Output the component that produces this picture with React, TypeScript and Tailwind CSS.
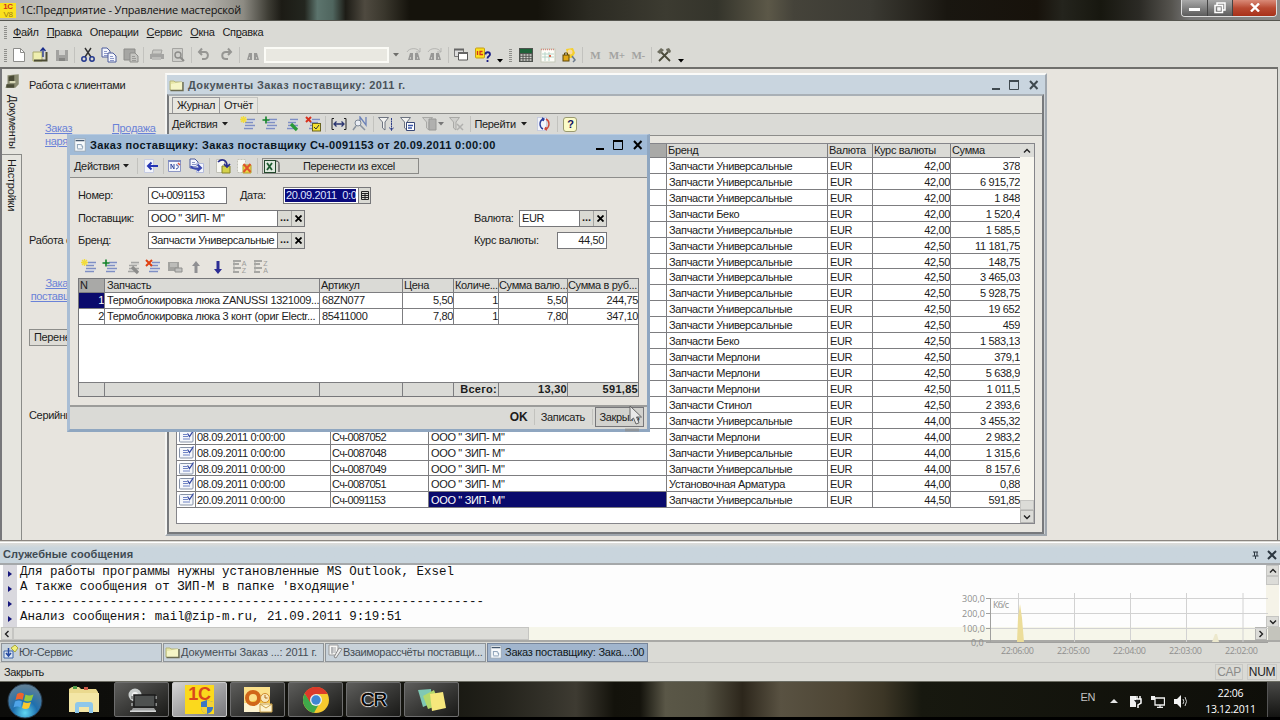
import React, { useState } from 'react';
import { clsx } from 'clsx';

type Mark = 'new' | 'add' | 'edit' | 'delete' | 'mark';

interface OrderRow {
    date?: string;
    number?: string;
    brand: string;
    rate: string;
    sum: string;
}

const UNI = 'Запчасти Универсальные';
const BEKO = 'Запчасти Беко';
const MERLONI = 'Запчасти Мерлони';

const orders: OrderRow[] = [
    { brand: UNI, rate: '42,00', sum: '378' },
    { brand: UNI, rate: '42,00', sum: '6 915,72' },
    { brand: UNI, rate: '42,00', sum: '1 848' },
    { brand: BEKO, rate: '42,00', sum: '1 520,4' },
    { brand: UNI, rate: '42,00', sum: '1 585,5' },
    { brand: UNI, rate: '42,50', sum: '11 181,75' },
    { brand: UNI, rate: '42,50', sum: '148,75' },
    { brand: UNI, rate: '42,50', sum: '3 465,03' },
    { brand: UNI, rate: '42,50', sum: '5 928,75' },
    { brand: UNI, rate: '42,50', sum: '19 652' },
    { brand: UNI, rate: '42,50', sum: '459' },
    { brand: BEKO, rate: '42,50', sum: '1 583,13' },
    { brand: MERLONI, rate: '42,50', sum: '379,1' },
    { brand: MERLONI, rate: '42,50', sum: '5 638,9' },
    { brand: MERLONI, rate: '42,50', sum: '1 011,5' },
    { brand: 'Запчасти Стинол', rate: '42,50', sum: '2 393,6' },
    { brand: UNI, rate: '44,00', sum: '3 455,32' },
    { date: '08.09.2011 0:00:00', number: 'Сч-0087052', brand: MERLONI, rate: '44,00', sum: '2 983,2' },
    { date: '08.09.2011 0:00:00', number: 'Сч-0087048', brand: UNI, rate: '44,00', sum: '1 315,6' },
    { date: '08.09.2011 0:00:00', number: 'Сч-0087049', brand: UNI, rate: '44,00', sum: '8 157,6' },
    { date: '08.09.2011 0:00:00', number: 'Сч-0087051', brand: 'Установочная Арматура', rate: '44,00', sum: '0,88' },
    { date: '20.09.2011 0:00:00', number: 'Сч-0091153', brand: UNI, rate: '44,50', sum: '591,85' },
];

const parts = [
    { name: 'Термоблокировка люка ZANUSSI 1321009...', article: '68ZN077', price: '5,50', qty: '1', sum: '5,50', rub: '244,75' },
    { name: 'Термоблокировка люка 3 конт (ориг Electr...', article: '85411000', price: '7,80', qty: '1', sum: '7,80', rub: '347,10' },
];

const messages = [
    'Для работы программы нужны установленные MS Outlook, Exsel',
    "А также сообщения от ЗИП-М в папке 'входящие'",
    '--------------------------------------------------------------',
    'Анализ сообщения: mail@zip-m.ru, 21.09.2011 9:19:51',
];

/* ---------- icons ---------- */

const Svg: React.FC<{ children: React.ReactNode; size?: number }> = ({ children, size = 16 }) => (
    <svg width={size} height={size} viewBox="0 0 16 16" fill="none" className="block shrink-0">
        {children}
    </svg>
);

const ListIcon: React.FC<{ mark: Mark; muted?: boolean }> = ({ mark, muted }) => {
    const line = muted ? '#a5a5a3' : '#7f8fc4';
    return (
        <Svg>
            <path d="M7 3.5h8M5 6.5h8M5 9.5h10M4 12.5h9" stroke={line} strokeWidth="1.6" />
            <path d="M7 5h8M5 11h9" stroke={muted ? '#c4c4c2' : '#c9d1ea'} />
            {mark === 'new' && <path d="M3.5 0v7M0 3.5h7M1 1l5 5M6 1l-5 5" stroke="#f2dc3c" strokeWidth="1.4" />}
            {mark === 'add' && <path d="M4 0.5v7M0.5 4h7" stroke="#12822a" strokeWidth="1.6" />}
            {mark === 'edit' && <path d="M8 8l6 6" stroke={muted ? '#8c8c8a' : '#2a9a3a'} strokeWidth="3.2" />}
            {mark === 'delete' && <path d="M1 1l6 6M7 1L1 7" stroke="#e04010" strokeWidth="2" />}
            {mark === 'mark' && (
                <>
                    <path d="M1 1l5 5M6 1L1 6" stroke="#d8301c" strokeWidth="2" />
                    <rect x="7.5" y="7.5" width="8" height="7.5" fill="#f4e232" stroke="#6a6420" />
                    <path d="M9 11l2 2 3-4" stroke="#333" />
                </>
            )}
        </Svg>
    );
};

const Folder = () => (
    <Svg>
        <path d="M1 4h4l1 1h7v8H1z" fill="#e6e6a6" stroke="#b6b67c" />
        <path d="M2 7l11-2v8H2z" fill="#f5f5c6" />
        <path d="M14 5v8.5H1.500" stroke="#6c6c50" strokeWidth="1.400" />
    </Svg>
);

const DocIcon = () => (
    <Svg size={14}>
        <rect x="2" y="1" width="12" height="14" fill="#f7fafc" stroke="#9aa7b4" />
        <path d="M3 3h10" stroke="#44586e" strokeWidth="1.4" />
        <path d="M5 7.5h5M5 12.5h6M5 7v5M9 9h2v3" stroke="#7b93ab" />
    </Svg>
);

const RowIcon = () => (
    <svg width="16" height="13" viewBox="0 0 16 13" fill="none" className="block">
        <rect x="0.5" y="1.5" width="13.500" height="10.5" rx="1" fill="#f5f7fb" stroke="#8793a8" />
        <path d="M4 4.500h4M4 6.500h5M4 9h7" stroke="#6f83c4" />
        <path d="M8.500 3.500l2 3L14.500 0.5" stroke="#3448a4" strokeWidth="1.300" />
    </svg>
);

const Doc: React.FC<{ x?: number; y?: number; muted?: boolean }> = ({ x = 0, y = 0, muted }) => (
    <g transform={`translate(${x} ${y})`}>
        <path d="M1 1h5l3 3v6H1z" fill={muted ? '#c6c6c2' : '#f4f6fc'} stroke={muted ? '#8f8f8c' : '#4d5c9c'} />
        <path d="M3 4.5h3M3 6.5h4M3 8.5h4" stroke={muted ? '#8f8f8c' : '#7482bb'} strokeWidth="0.8" />
    </g>
);

const Binoculars: React.FC<{ arrow?: boolean }> = ({ arrow }) => (
    <Svg>
        <path d="M4 6h3v7H2zM9 6h3l2 7H9z" fill="#989896" />
        <path d="M7 8h2M4 11h1M11 11h1" stroke="#d8d8d4" strokeWidth="1.4" />
        {arrow && <path d="M1 5c2-4 10-5 13 0M14 1v4h-4" stroke="#b5b5b2" />}
    </Svg>
);

const Funnel: React.FC<{ muted?: boolean; children?: React.ReactNode }> = ({ muted, children }) => (
    <Svg>
        <path d="M0.5 1.5h10L7 6v8L4.5 12V6z" fill={muted ? '#cfcfcc' : '#f2f2f0'} stroke={muted ? '#a9a9a6' : '#6e7480'} />
        {children}
    </Svg>
);

/* ---------- small pieces ---------- */

function cn(...names: string[]) {
    return names.join(' ');
}

const Slot: React.FC<{ children: React.ReactNode }> = ({ children }) => (
    <div className="flex w-[21.5px] shrink-0 items-center justify-center">{children}</div>
);

const Sep: React.FC<{ wide?: boolean }> = ({ wide }) => (
    <div className={clsx('flex h-4 shrink-0 justify-center', wide ? 'w-[6px]' : 'w-[4.5px]')}>
        <div className="w-px bg-[#c2c2be]" />
    </div>
);

const Grip = () => (
    <div className="flex w-[10px] shrink-0 justify-center">
        <svg width="3" height="13" viewBox="0 0 3 13">
            <path d="M0 0.5h3M0 2.5h3M0 4.5h3M0 6.5h3M0 8.5h3M0 10.5h3M0 12.5h3" stroke="#8e8e8a" />
        </svg>
    </div>
);

const Down: React.FC<{ className?: string }> = ({ className = 'text-black' }) => (
    <svg width="6" height="4" viewBox="0 0 6 4" className={clsx('shrink-0', className)}>
        <path d="M0 0h6L3 3.5z" fill="currentColor" />
    </svg>
);

const Chevron: React.FC<{ d: string }> = ({ d }) => (
    <svg width="8" height="8" viewBox="0 0 8 8" fill="none">
        <path d={d} stroke="#222" strokeWidth="1.4" />
    </svg>
);

const WindowButtons: React.FC<{ className: string }> = ({ className }) => (
    <svg width="48" height="12" viewBox="0 0 48 12" fill="none" className={clsx('shrink-0', className)}>
        <path d="M1 10h8" stroke="currentColor" strokeWidth="2" />
        <path d="M18.500 2v8.500h9V2" stroke="currentColor" />
        <path d="M18 2h10" stroke="currentColor" strokeWidth="2" />
        <path d="M39 2l7.500 8M46.500 2l-7.500 8" stroke="currentColor" strokeWidth="2" />
    </svg>
);

const PickButtons = () => (
    <>
        <button className="flex h-full w-[14px] items-center justify-center border-l border-[#77777a] bg-[#dadad4] pb-0.5 font-bold tracking-normal">...</button>
        <button className="flex h-full w-[13px] items-center justify-center border-l border-[#a5a5a2] bg-[#dadad4]">
            <svg width="7" height="7" viewBox="0 0 7 7">
                <path d="M0.5 0.500l6 6M6.500 0.500l-6 6" stroke="#000" strokeWidth="1.800" />
            </svg>
        </button>
    </>
);

/* ---------- main frame ---------- */

const TitleBar = () => (
    <div className="flex h-[21px] items-start border-b border-[#55554f] bg-[linear-gradient(90deg,#b9b7b1_0%,#c9c7c2_9%,#b3b1ab_16%,#8d8b83_19%,#3c3b33_21%,#1c1b15_22%,#23261f_23.800%,#5c746d_24.800%,#4f655e_26%,#1d1c16_27%,#4f4a40_28.500%,#3a372d_30%,#15130c_32%,#15130c_42%,#2b2a22_46%,#3c3b31_52%,#34342b_56%,#5c5848_60%,#45433a_62%,#3b3a33_68%,#191610_74%,#17120b_81%,#24241d_83%,#17170f_86%,#2b2a25_89%,#55534e_91.500%,#777_93%,#8a8a88_100%)]">
        <div className="mt-[3px] grid h-[15px] w-4 place-items-center bg-[#fbe11e] text-[8px] leading-[7px] font-bold text-[#d4301a]">
            <span>1С</span>
            <span className="font-normal text-[#a08010]">V8</span>
        </div>
        <span className="ml-1 pt-[3px] font-['Open_Sans',sans-serif] text-[11px] leading-[14px] tracking-[-0.180px] whitespace-nowrap text-[#111]">
            1С:Предприятие - Управление мастерской
        </span>
        <div className="mr-[3px] ml-auto flex h-[17px] overflow-hidden rounded-b border border-t-0 border-[#ddd] text-white">
            <div className="flex w-[26px] justify-center border-r border-[#444] bg-linear-to-b from-[#a9a9a9] to-[#5c5c5c] pt-2">
                <div className="h-[3px] w-[11px] bg-white" />
            </div>
            <div className="flex w-[25px] justify-center border-r border-[#444] bg-linear-to-b from-[#a9a9a9] to-[#5c5c5c] pt-0.5">
                <svg width="12" height="12" viewBox="0 0 12 12" fill="none" stroke="#fff" strokeWidth="1.500">
                    <path d="M3 3V1h8v7H9M1 3.500h7.500v7H1zM4 6h2v2H4z" />
                </svg>
            </div>
            <div className="flex w-[43px] justify-center bg-linear-to-b from-[#d98a78] via-[#b94a32] to-[#a83018] pt-[3px]">
                <svg width="10" height="9" viewBox="0 0 10 9">
                    <path d="M1 0.500l8 8M9 0.500l-8 8" stroke="#fff" strokeWidth="2.400" />
                </svg>
            </div>
        </div>
    </div>
);

const menu = [
    ['', 'Ф', 'айл'],
    ['', 'П', 'равка'],
    ['Операции', '', ''],
    ['', 'С', 'ервис'],
    ['', 'О', 'кна'],
    ['Сп', 'р', 'авка'],
];

const MenuBar = () => (
    <div className="flex h-[22px] items-center text-[11px]">
        <div className="mr-[3px] flex"><Grip /></div>
        <div className="flex gap-[8px]">
            {menu.map(([a, b, c]) => (
                <span key={a + b + c}>{a}<u>{b}</u>{c}</span>
            ))}
        </div>
    </div>
);

const MainToolbar = () => (
    <div className="flex h-6 items-center">
        <div className="flex w-[8px]"><Grip /></div>
        <Slot><Svg><path d="M2.500 1.500h7l4 4v9h-11z" fill="#fff" stroke="#8d8d8a" /><path d="M9.500 1.500v4h4" stroke="#8d8d8a" /></Svg></Slot>
        <Slot>
            <Svg>
                <path d="M1 5h9v9H1z" fill="#efefb0" stroke="#a9a96c" />
                <path d="M14.500 5v8.500H2" stroke="#4c4c34" strokeWidth="2" />
                <path d="M11 10V1M8.500 4L11 1l2.500 3" stroke="#1b2f8c" strokeWidth="1.300" />
            </Svg>
        </Slot>
        <Slot><Svg><path d="M2 3h12v11H2z" fill="#a2a2a0" /><path d="M5 3h6v5H5z" fill="#cfcfcc" /><path d="M5 11h6v3H5z" fill="#858583" /></Svg></Slot>
        <Sep />
        <Slot>
            <Svg>
                <path d="M5 1l6 9M11 1L5 10" stroke="#333" strokeWidth="1.400" />
                <circle cx="4" cy="12" r="2.200" stroke="#23388f" strokeWidth="1.500" />
                <circle cx="12" cy="12" r="2.200" stroke="#23388f" strokeWidth="1.500" />
            </Svg>
        </Slot>
        <Slot><Svg><Doc /><Doc x={6} y={5} /></Svg></Slot>
        <Slot><Svg><path d="M1 2h11v11H1z" fill="#a6a6a3" stroke="#8c8c89" /><Doc x={6} y={5} muted /></Svg></Slot>
        <Sep />
        <Slot><Svg><path d="M4 3h9l-1 4H3z" fill="#c9c9c5" stroke="#a2a29f" /><path d="M1 7h14v5H1z" fill="#a4a4a2" /><path d="M3 10h9v3H3z" fill="#bcbcb9" /></Svg></Slot>
        <Slot><Svg><path d="M2.500 1.500h10v13h-10z" fill="#cfcfcb" stroke="#a4a4a1" /><circle cx="8" cy="8" r="3" stroke="#8c8c89" strokeWidth="1.400" /><path d="M10 10l4 4" stroke="#8c8c89" strokeWidth="2" /></Svg></Slot>
        <Sep />
        <Slot><Svg><path d="M3 5h6c4 0 4 7-1 7H6M6 1.500L3 5l3 3" stroke="#969693" strokeWidth="2" /></Svg></Slot>
        <Slot><Svg><path d="M13 5H8c-5 0-5 7 0 7h2M10 1.500L13 5l-3 3" stroke="#969693" strokeWidth="2" /></Svg></Slot>
        <Sep wide />
        <Slot><Binoculars /></Slot>
        <div className="h-4 w-[125px] shrink-0 border-2 border-[#fbfbf6] bg-[#e9e8e1]" />
        <div className="flex h-4 w-[14px] shrink-0 items-center justify-center"><Down className="text-[#6e6e6b]" /></div>
        <Slot><Binoculars arrow /></Slot>
        <Slot><Binoculars arrow /></Slot>
        <Sep />
        <Slot>
            <Svg>
                <path d="M1.500 2.500h9v7h-9z" fill="#ddd" stroke="#777" />
                <path d="M5.500 6h9v7h-9z" fill="#fff" stroke="#555" />
                <path d="M1 2.500h10M5 6h10" stroke="#666" strokeWidth="2" />
            </Svg>
        </Slot>
        <Slot>
            <Svg>
                <rect x="0.500" y="1" width="9" height="10" rx="1" fill="#fbe11e" stroke="#c59c14" />
                <path d="M2.500 4v4M7.500 4.500H5v3h3" stroke="#d5331c" strokeWidth="1.300" />
                <path d="M10.500 7.500c0-3 4.500-3 4.500 0 0 2-2.500 1.500-2.500 4M12.500 13v2" stroke="#1a1f86" strokeWidth="1.800" />
            </Svg>
        </Slot>
        <div className="flex w-3 justify-center pt-3"><Down /></div>
        <Grip />
        <Slot>
            <Svg>
                <rect x="1" y="1" width="14" height="14" fill="#4e524e" />
                <path d="M2 2h12v4H2z" fill="#1c6238" />
                <path d="M2.500 8h11M2.500 10.500h11M2.500 13h11" stroke="#d9d9d5" strokeWidth="1.500" strokeDasharray="2 1" />
            </Svg>
        </Slot>
        <Slot>
            <Svg>
                <rect x="1" y="2" width="14" height="13" fill="#fdfdf8" stroke="#c5c9ba" />
                <path d="M1 2.500h14" stroke="#d88a80" strokeWidth="1.500" strokeDasharray="1 1" />
                <path d="M2 7h12M2 10h12M5 5v9M9 5v9" stroke="#b7d5c9" />
                <path d="M9 8h2v2H9z" fill="#e06a50" />
            </Svg>
        </Slot>
        <Slot>
            <Svg>
                <path d="M5 2l7-1 2 5-3 5H7z" fill="#f5cf2c" />
                <circle cx="9" cy="5" r="2.500" fill="#f7d9a0" />
                <path d="M11 9l3 4-2 2" stroke="#6d7c8c" strokeWidth="1.500" />
                <rect x="2" y="8" width="6" height="6" fill="#e0a818" stroke="#5e4708" />
                <path d="M3.500 8V6h3v2" stroke="#5e4708" />
            </Svg>
        </Slot>
        <Sep />
        {['M', 'M+', 'M-'].map(m => (
            <Slot key={m}><span className="font-['Liberation_Serif',serif] text-[11px] font-bold text-[#a3a3a1]">{m}</span></Slot>
        ))}
        <Sep />
        <Slot>
            <Svg>
                <path d="M3 14l9-9M5 5l9 9" stroke="#4a4a3a" strokeWidth="1.800" />
                <path d="M1 5l4-4 3 2-4 4zM10 2l3-1 2 3-1 2-3-1z" fill="#6c6c5e" />
            </Svg>
        </Slot>
        <div className="flex w-3 justify-center pt-3"><Down /></div>
    </div>
);

/* ---------- start page behind the windows ---------- */

const SideTabs = () => (
    <div className="flex w-[22px] shrink-0 flex-col items-center border-l-2 border-[#77777a] bg-[#e6e5df] pt-1">
        <Svg size={18}>
            <path d="M4 2l10-1v9l-3 3H2l2-4z" fill="#8b8c72" />
            <path d="M5 3l5-1v5H5zM3 10h7v3H3z" fill="#4a4b36" />
            <path d="M6 8h5" stroke="#e6e6c4" strokeWidth="1.500" />
        </Svg>
        <div className="mt-1 h-[59px] shrink-0 [writing-mode:vertical-rl]">Документы</div>
        <div className="w-full flex-1 border-t border-r border-[#8b8b88] bg-[#e6e5df]">
            <div className="flex h-[60px] w-full items-center pt-[4px] tracking-[-0.200px] [writing-mode:vertical-rl]">Настройки</div>
        </div>
    </div>
);

const StartPage = () => (
    <div className="flex flex-1 flex-col bg-[#e7e4de] pl-[7px]">
        <p className="mt-[10px]">Работа с клиентами</p>
        <div className="mt-[30px] flex gap-[37px] pl-[16px] leading-[13px] text-[#6a82d8] underline">
            <p className="w-[30px]">Заказ наряд</p>
            <p>Продажа</p>
        </div>
        <p className="mt-[86px]">Работа с поставщиками</p>
        <p className="mt-[30px] w-[60px] text-center leading-[13px] text-[#6a82d8] underline">Заказ поставщику</p>
        <button className="mt-[26px] h-[17px] w-[90px] border border-[#8d8d8a] bg-[#dedcd6] pl-[4px] text-left leading-[13px]">Перенести</button>
        <p className="mt-[63px]">Серийный номер</p>
    </div>
);

/* ---------- order list window ---------- */

const OrderListWindow = () => {
    const cell = 'shrink-0 overflow-hidden border-r border-[#7d7d80] whitespace-nowrap';
    return (
        <div className="absolute top-[4px] left-[165px] flex h-[463px] w-[882px] flex-col border-2 border-t-[#fafaf8] border-r-[#a0a7ae] border-b-[#a0a7ae] border-l-[#f4f4f2] bg-[#cfd3d6]">
            <div className="flex h-[19px] items-center bg-[#c9d5df] pt-px pr-1 pl-[2px] text-[#4b5359]">
                <Folder />
                <span className="ml-[3px] font-bold tracking-[0.400px]">Документы Заказ поставщику: 2011 г.</span>
                <WindowButtons className="mr-[2px] ml-auto text-[#3f494f]" />
            </div>
            <div className="mr-[1px] flex flex-1 flex-col border-2 border-[#77797c] border-t-[#a9b0b6] bg-[#e7e5df]">
                <div className="flex h-[17px] items-end bg-[#e7e6e0]">
                    <div className="ml-[3px] flex h-[16px] w-[48px] items-center justify-center border border-b-0 border-[#97979a]">Журнал</div>
                    <div className="flex h-[16px] w-[38px] items-center justify-center border-t border-r border-[#c5c5c1]">Отчёт</div>
                </div>
                <div className="flex h-[23px] items-center border-t border-b border-[#8d8d8b] bg-[#dadad6] pb-px">
                    <span className="ml-[3px]">Действия</span>
                    <Down className="mr-[9px] ml-[5px]" />
                    <Slot><ListIcon mark="new" /></Slot>
                    <Slot><ListIcon mark="add" /></Slot>
                    <Slot><ListIcon mark="edit" /></Slot>
                    <Slot><ListIcon mark="mark" /></Slot>
                    <Sep />
                    <Slot>
                        <Svg>
                            <path d="M3 2.500H1v11h2M13 2.500h2v11h-2" stroke="#222" />
                            <path d="M3 8h10M5.500 5.500L3 8l2.500 2.500M10.500 5.500L13 8l-2.500 2.500" stroke="#2a3570" strokeWidth="1.300" />
                        </Svg>
                    </Slot>
                    <Slot>
                        <Svg>
                            <path d="M8 9V1l6 8V1" stroke="#6d83b8" strokeWidth="1.300" />
                            <circle cx="6" cy="7" r="3" fill="#e9edf4" stroke="#7c8694" />
                            <path d="M8 9l5 5M4 10l-3 4" stroke="#8a93a0" strokeWidth="1.500" />
                        </Svg>
                    </Slot>
                    <Sep />
                    <Slot><Funnel><path d="M13.500 2v12M11.500 11.500l2 3 2-3" stroke="#2c3c88" strokeDasharray="2 0.500" /></Funnel></Slot>
                    <Slot><Funnel><path d="M6.500 6.500h8v8h-8z" fill="#fff" stroke="#3a4a78" /><path d="M8 9.500h5M8 12h4" stroke="#3855a8" strokeWidth="1.500" /></Funnel></Slot>
                    <div className="flex w-[28px] items-center pl-1">
                        <Funnel muted><path d="M7 3h7v11H7z" fill="#b0b0ae" stroke="#989896" /></Funnel>
                        <Down className="text-[#777]" />
                    </div>
                    <Slot><Funnel muted><path d="M8 8l6 6M14 8l-6 6" stroke="#b0b0ae" strokeWidth="1.500" /></Funnel></Slot>
                    <Sep />
                    <span className="ml-[2px]">Перейти</span>
                    <Down className="mr-[7px] ml-[5px]" />
                    <Slot>
                        <Svg>
                            <path d="M1.500 1.500h9v13h-9z" fill="#f2f4fa" stroke="#aab3d8" strokeDasharray="1 1" />
                            <path d="M7 3c-4 2-4 8 0 10M6 2l2 1-1 2" stroke="#2b3f9c" strokeWidth="1.400" />
                            <path d="M10 3c4 2 4 8 0 10M11 14l-2-1 1-2" stroke="#cf4a3c" strokeWidth="1.400" />
                        </Svg>
                    </Slot>
                    <Sep />
                    <Slot>
                        <span className="grid h-[15px] w-[14px] place-items-center rounded-[3px] border border-[#9a9a70] bg-[#fbfbc8] text-[11px] font-bold text-[#101060]">?</span>
                    </Slot>
                </div>
                <div className="mx-[7px] mt-[7px] flex h-[381px] border border-[#85858a] bg-white">
                    <div className="flex-1">
                        <div className="flex h-[14px] border-b border-[#7d7d80] bg-[#dadad6]">
                            <div className={cn(cell, 'w-[19px]')} />
                            <div className={cn(cell, 'w-[135px]')} />
                            <div className={cn(cell, 'w-[98px]')} />
                            <div className={cn(cell, 'w-[238px] bg-[#a9a9a7]')} />
                            <div className={cn(cell, 'w-[161px] pl-[1px]')}>Бренд</div>
                            <div className={cn(cell, 'w-[45px] pl-[1px]')}>Валюта</div>
                            <div className={cn(cell, 'w-[78px] pl-[1px]')}>Курс валюты</div>
                            <div className="pl-[1px]">Сумма</div>
                        </div>
                        {orders.map((o, i) => {
                            const last = i === orders.length - 1;
                            return (
                                <div key={i} className="flex h-[15.930px] items-stretch border-b border-[#7d7d80] leading-[16px]">
                                    <div className={cn(cell, 'w-[19px] pt-[1px] pl-[2px]')}>{o.date && <RowIcon />}</div>
                                    <div className={cn(cell, 'w-[135px] pl-[1px]')}>{o.date}</div>
                                    <div className={cn(cell, 'w-[98px] pl-[1px] tracking-[-0.600px]')}>{o.number}</div>
                                    <div className={cn(cell, last ? 'w-[238px] bg-[#0a0a6c] pl-[2px] text-white' : 'w-[238px] pl-[2px]')}>{o.date && 'ООО " ЗИП- М"'}</div>
                                    <div className={cn(cell, 'w-[161px] pl-[2px]')}>{o.brand}</div>
                                    <div className={cn(cell, 'w-[45px] pl-[2px]')}>EUR</div>
                                    <div className={cn(cell, 'w-[78px] text-right')}>{o.rate}</div>
                                    <div className="flex-1 text-right">{o.sum}</div>
                                </div>
                            );
                        })}
                    </div>
                    <div className="flex w-[14px] flex-col items-center justify-between bg-[#f8f6ee]">
                        <div className="grid h-[13px] w-full place-items-center bg-[#dcdcd8]"><Chevron d="M1 5.500l3-3 3 3" /></div>
                        <div className="w-full">
                            <div className="h-[10px] border border-[#c5c5c2] bg-[#dcdcd8]" />
                            <div className="grid h-[13px] place-items-center border border-[#b5b5b2] bg-[#dcdcd8]"><Chevron d="M1 2.500l3 3 3-3" /></div>
                        </div>
                    </div>
                </div>
            </div>
        </div>
    );
};

/* ---------- order form window ---------- */

const OrderWindow = () => {
    const cell = 'shrink-0 overflow-hidden border-r border-[#7d7d80] whitespace-nowrap';
    const field = 'flex h-[17px] items-center border border-[#77777a] bg-white';
    const [row, setRow] = useState(0);
    return (
        <div className="absolute top-[65px] left-[67px] flex h-[298px] w-[583px] flex-col border-[3px] border-t-[1px] border-[#8fa6c0] border-t-[#b9cbe0] border-l-[#a9bdd4] bg-[#e7e4de]">
            <div className="flex h-[20px] shrink-0 items-center bg-[#a1bbd7] pr-1 pl-[3px]">
                <DocIcon />
                <span className="ml-[3px] font-bold tracking-[0.380px] whitespace-nowrap text-[#0a1622]">
                    Заказ поставщику: Заказ поставщику Сч-0091153 от 20.09.2011 0:00:00
                </span>
                <WindowButtons className="ml-auto text-black" />
            </div>
            <div className="flex h-[23px] shrink-0 items-center border-b border-[#8d8d8b] bg-[#dadad6]">
                <span className="ml-[4px]">Действия</span>
                <Down className="mr-[5px] ml-[4px]" />
                <Sep wide />
                <Slot>
                    <Svg>
                        <path d="M1.500 1.500h9v13h-9z" fill="#f4f6fc" stroke="#c5cbe2" />
                        <path d="M5 8h10M8.500 4.500L5 8l3.500 3.500" stroke="#2434b4" strokeWidth="2" />
                    </Svg>
                </Slot>
                <div className="-mx-[1px] flex"><Sep /></div>
                <Slot>
                    <Svg>
                        <path d="M1.500 2.500h12v11h-12z" fill="#f4f6fc" stroke="#8d97c4" />
                        <path d="M1 3h13" stroke="#7b88c0" strokeWidth="2" />
                        <path d="M4 11V6l3 5V6M9 7c3-1 3 4 0 4" stroke="#3348a0" />
                        <path d="M11 5l2 2" stroke="#d65040" strokeWidth="1.500" />
                    </Svg>
                </Slot>
                <Slot>
                    <Svg>
                        <Doc />
                        <path d="M7.500 5.500h7v9h-7z" fill="#f4f6fc" stroke="#b3bbdc" />
                        <path d="M2 8c1 3 5 3 9 2M8.500 6.500L12 10l-3.500 3" stroke="#3a49ae" strokeWidth="2" />
                    </Svg>
                </Slot>
                <Sep />
                <Slot>
                    <Svg>
                        <path d="M1.500 1.500h8v13h-8z" fill="#f8f8f2" stroke="#c2c2b8" />
                        <path d="M7 8h8v7H7z" fill="#d5d24a" stroke="#85832a" />
                        <path d="M3 4c4-4 9-2 9 4M9 6l3 3 3-3" stroke="#2a2f8c" strokeWidth="1.700" />
                    </Svg>
                </Slot>
                <Slot>
                    <Svg>
                        <path d="M1.500 1.500h8v13h-8z" fill="#f8f8f2" stroke="#c2c2b8" strokeDasharray="2 1" />
                        <path d="M7 7h8v8H7z" fill="#ecd84a" stroke="#b3a02a" />
                        <path d="M7.500 6l7 8M14.500 6l-7 8" stroke="#e0522c" strokeWidth="2" />
                    </Svg>
                </Slot>
                <Sep wide />
                <button className="ml-[1px] flex h-[16px] w-[157px] items-center border border-[#8a8a87] bg-[#dadad4]">
                    <svg width="17" height="15" viewBox="0 0 17 15" fill="none">
                        <rect x="1.500" y="1.500" width="11" height="12" fill="#dfe9df" stroke="#23482c" />
                        <path d="M4 4l5 7M9 4l-5 7" stroke="#1e5c30" strokeWidth="1.800" />
                        <path d="M13 2c3 0 3 2 3 4v7" stroke="#333" />
                    </svg>
                    <span className="ml-[23px]">Перенести из excel</span>
                </button>
            </div>
            <div className="flex flex-1 flex-col pt-[9px] pr-[8px] pl-[8px]">
                <div className="flex items-center">
                    <span className="w-[70px]">Номер:</span>
                    <div className={cn(field, 'w-[79px] pl-[2px] tracking-[-0.600px]')}>Сч-0091153</div>
                    <span className="ml-[13px] w-[43px]">Дата:</span>
                    <div className={cn(field, 'w-[88px] justify-between pl-[1px]')}>
                        <span className="h-[13px] w-[71px] overflow-hidden bg-[#0a0a7c] pl-[1px] leading-[13px] whitespace-nowrap text-[#dfe4ff]">20.09.2011&nbsp; 0:00:00</span>
                        <span className="grid h-full w-[12px] place-items-center border-l border-[#77777a] bg-[#dadad4]">
                            <svg width="8" height="9" viewBox="0 0 8 9" fill="none">
                                <path d="M0.500 0.500h7v8h-7zM0 2.500h8M1 4.500h6M1 6.500h6M4 3v5" stroke="#222" />
                            </svg>
                        </span>
                    </div>
                </div>
                <div className="mt-[6px] flex items-center">
                    <span className="w-[70px]">Поставщик:</span>
                    <div className={cn(field, 'w-[157px] pl-[2px]')}>
                        <span className="flex-1">ООО " ЗИП- М"</span>
                        <PickButtons />
                    </div>
                    <span className="ml-[169px] w-[45px]">Валюта:</span>
                    <div className={cn(field, 'w-[88px] pl-[2px]')}>
                        <span className="flex-1">EUR</span>
                        <PickButtons />
                    </div>
                </div>
                <div className="mt-[5px] flex items-center">
                    <span className="w-[70px]">Бренд:</span>
                    <div className={cn(field, 'w-[157px] pl-[2px]')}>
                        <span className="w-0 flex-1 whitespace-nowrap">{UNI}</span>
                        <PickButtons />
                    </div>
                    <span className="ml-[169px] w-[83px]">Курс валюты:</span>
                    <div className={cn(field, 'w-[50px] justify-end pr-[2px]')}>44,50</div>
                </div>
                <div className="mt-[9px] mb-[3px] flex h-[17px] items-center">
                    <Slot><ListIcon mark="new" /></Slot>
                    <Slot><ListIcon mark="add" /></Slot>
                    <Slot><ListIcon mark="edit" muted /></Slot>
                    <Slot><ListIcon mark="delete" /></Slot>
                    <Slot><Svg><path d="M1 3h11v9H1z" fill="#a3a3a0" /><path d="M3 5h7M3 7h7" stroke="#d5d5d2" /><path d="M8 9h7v4H8z" fill="#c2c2c0" stroke="#8e8e8c" /></Svg></Slot>
                    <Slot><Svg><path d="M8 2l4 5h-2.500v7h-3V7H4z" fill="#8f8f92" /></Svg></Slot>
                    <Slot><Svg><path d="M8 15l4-5H9.500V2h-3v8H4z" fill="#2c2c94" /></Svg></Slot>
                    {['AZ', 'ZA'].map(s => (
                        <Slot key={s}>
                            <div className="flex items-center text-[7px] leading-[7px] text-[#9b9b99]">
                                <svg width="10" height="15" viewBox="0 0 10 15" fill="none">
                                    <path d="M1 2h8M1 5h6M1 9h8M1 13h6" stroke="#a6a6a3" strokeWidth="1.800" />
                                    <path d="M2 2v11" stroke="#a6a6a3" />
                                </svg>
                                <span className="w-[5px] break-all">{s}</span>
                            </div>
                        </Slot>
                    ))}
                </div>
                <div className="flex h-[119px] flex-col border border-[#77777a] bg-white">
                    <div className="flex h-[14px] shrink-0 border-b border-[#7d7d80] bg-[#dadad6] leading-[13px]">
                        <div className={cn(cell, 'w-[26px] bg-[#a9a9a7] pl-[1px]')}>N</div>
                        <div className={cn(cell, 'w-[215px] pl-[2px]')}>Запчасть</div>
                        <div className={cn(cell, 'w-[83px] pl-[1px]')}>Артикул</div>
                        <div className={cn(cell, 'w-[51px] pl-[1px]')}>Цена</div>
                        <div className={cn(cell, 'w-[45px] pl-[1px]')}>Количе...</div>
                        <div className={cn(cell, 'w-[69px]')}>Сумма валю...</div>
                        <div className="whitespace-nowrap">Сумма в руб...</div>
                    </div>
                    {parts.map((p, i) => (
                        <div key={p.article} onClick={() => setRow(i)} className="flex h-[16px] shrink-0 border-b border-[#7d7d80] leading-[15px]">
                            <div className={cn(cell, row === i ? 'w-[26px] bg-[#0a0a6c] text-right text-white' : 'w-[26px] text-right')}>{i + 1}</div>
                            <div className={cn(cell, 'w-[215px] pl-[2px]')}>{p.name}</div>
                            <div className={cn(cell, 'w-[83px] pl-[2px]')}>{p.article}</div>
                            <div className={cn(cell, 'w-[51px] text-right')}>{p.price}</div>
                            <div className={cn(cell, 'w-[45px] text-right')}>{p.qty}</div>
                            <div className={cn(cell, 'w-[69px] text-right')}>{p.sum}</div>
                            <div className="flex-1 text-right">{p.rub}</div>
                        </div>
                    ))}
                    <div className="mt-auto flex h-[14px] border-t border-[#7d7d80] bg-[#dadad6] text-right leading-[13px] font-bold tracking-[0.300px]">
                        <div className={cn(cell, 'w-[26px]')} />
                        <div className={cn(cell, 'w-[215px]')} />
                        <div className={cn(cell, 'w-[83px]')} />
                        <div className={cn(cell, 'w-[51px]')} />
                        <div className={cn(cell, 'w-[45px] pr-[1px]')}>Всего:</div>
                        <div className={cn(cell, 'w-[69px]')}>13,30</div>
                        <div className="flex-1">591,85</div>
                    </div>
                </div>
            </div>
            <div className="flex h-[24px] shrink-0 items-center justify-end border-t-2 border-[#9c9c9a] bg-[#dadad6] pr-[3px] pb-[2px]">
                <span className="text-[12px] font-bold tracking-normal">OK</span>
                <div className="mx-[6px] h-4 w-px bg-[#c2c2be]" />
                <span>Записать</span>
                <div className="mr-[2px] ml-[7px] h-4 w-px bg-[#c2c2be]" />
                <button className="h-[20px] w-[49px] border border-[#77777a] bg-[#d2d2ce] text-center">Закрыть</button>
            </div>
        </div>
    );
};

/* ---------- bottom panels ---------- */

const MessagesPanel = () => (
    <div className="flex flex-col">
        <div className="flex h-[22px] items-center border-b-2 border-[#a5a8aa] bg-linear-to-b from-[#dcdcd8] to-[#c9d5dd] to-25% pt-[3px] pr-[1px] pl-[3px] text-[#3f4a52]">
            <span className="font-bold tracking-[0.100px]">Служебные сообщения</span>
            <svg width="30" height="12" viewBox="0 0 30 12" fill="none" className="ml-auto">
                <path d="M4 3h5M3.500 7h6M5.500 3v4M8 3v4M6.500 7v3" stroke="#2c3740" />
                <path d="M19 2l8 8M27 2l-8 8" stroke="#2c3740" strokeWidth="2" />
            </svg>
        </div>
        <div className="flex h-[62px] bg-[#fdfdfd]">
            <div className="ml-[3px] flex w-[14px] flex-col bg-[#d9d8de] pt-px">
                {messages.map(m => (
                    <div key={m} className="flex h-[15px] items-center justify-center">
                        <svg width="4" height="6" viewBox="0 0 4 6"><path d="M0 0l4 3-4 3z" fill="#15157c" /></svg>
                    </div>
                ))}
            </div>
            <pre className="flex-1 pl-[3px] font-['Liberation_Mono',monospace] text-[12.470px] leading-[15px] tracking-normal text-[#111]">
                {messages.join('\n')}
            </pre>
            <div className="mr-[1px] flex w-[13px] flex-col bg-[#f5f3e8]">
                <div className="grid h-[11px] place-items-center border border-[#c5c5c2] bg-[#dcdcd8]"><Chevron d="M1 5.500l3-3 3 3" /></div>
                <div className="h-[9px] border border-[#c5c5c2] bg-[#dcdcd8]" />
                <div className="mt-auto grid h-[11px] place-items-center border border-[#c5c5c2] bg-[#dcdcd8]"><Chevron d="M1 2.500l3 3 3-3" /></div>
            </div>
        </div>
        <div className="flex h-[13px] bg-[#f6f6ea]">
            <div className="ml-[1px] grid w-[12px] place-items-center border border-[#c5c5c2] bg-[#dcdcd8]"><Chevron d="M5.500 1l-3 3 3 3" /></div>
            <div className="w-[516px] border border-[#c5c5c2] bg-[#dcdcd8]" />
            <div className="mr-px ml-auto grid w-[12px] place-items-center border border-[#b5b5b2] bg-[#dcdcd8]"><Chevron d="M2.500 1l3 3-3 3" /></div>
            <div className="w-[12px] bg-[#c4c4bc]" />
        </div>
    </div>
);

const windowTabs = [
    { title: 'Юг-Сервис', icon: 'service' },
    { title: 'Документы Заказ ...: 2011 г.', icon: 'folder' },
    { title: 'Взаиморассчёты поставщи...', icon: 'report' },
    { title: 'Заказ поставщику: Зака...:00', icon: 'doc' },
];

const WindowTabs = () => (
    <div className="flex h-[22px] items-center gap-[1.500px] border-t-2 border-[#a9a9a6] pl-px text-[#454d54]">
        {windowTabs.map((t, i) => (
            <div
                key={t.title}
                className={clsx(
                    'flex h-[19px] w-[160.500px] items-center border pl-[1px] whitespace-nowrap',
                    i === 3 ? 'border-[#77859a] bg-[#a1b5cd] text-[#101820]' : 'border-[#8f9498] bg-[#c8d2da]'
                )}
            >
                {t.icon === 'service' && (
                    <Svg><path d="M1 7h9v7H1z" fill="#dce6f2" stroke="#3d64a8" /><path d="M5.500 4v7M3 9l2.500 3L8 9" stroke="#2449a0" strokeWidth="1.500" /><path d="M8 4l4-3 3 3-3 4z" fill="#f1f07a" stroke="#a8a640" /></Svg>
                )}
                {t.icon === 'folder' && <Folder />}
                {t.icon === 'report' && (
                    <Svg><path d="M2 1h9v10H2z" fill="#f7f7f5" stroke="#999" /><path d="M4 4h5M4 6h5M4 8h5M5 3v7" stroke="#8e9096" strokeWidth="0.800" /><path d="M9 14l6-9-3-1-5 9z" fill="#eee" stroke="#8b8b8b" /></Svg>
                )}
                {t.icon === 'doc' && <DocIcon />}
                <span
                    className={clsx(
                        i === 1 && 'tracking-[-0.120px]',
                        i === 2 && 'tracking-[-0.330px]',
                        i === 3 && 'ml-[2px] tracking-[-0.260px]'
                    )}
                >
                    {t.title}
                </span>
            </div>
        ))}
    </div>
);

const StatusBar = () => (
    <div className="flex h-[19px] items-center border-t border-[#c3c3c0] pr-[3px] pl-[4px]">
        <span>Закрыть</span>
        <span className="ml-auto flex h-[16px] w-[28px] items-center justify-center border border-[#c9c9c5] text-[12px] text-[#8b8b89]">CAP</span>
        <span className="ml-[4px] flex h-[16px] w-[30px] items-center justify-center border border-[#c9c9c5] text-[12px] text-[#222]">NUM</span>
    </div>
);

const TrafficChart = () => (
    <svg width="320" height="68" viewBox="0 0 320 68" className="absolute top-[592px] left-[960px] font-['Open_Sans',sans-serif] text-[9px] tracking-normal" fill="none">
        <path d="M30 6.500h278M30 21.500h278M30 36.500h278M58.500 1v49M114.500 1v49M170.500 1v49M226.500 1v49M283 1v49" stroke="#d2d2d2" />
        <path d="M30.500 6v44M30 50.500h278M26 6.500h4M26 21.500h4M26 36.500h4M26 50.500h4" stroke="#a0a09e" />
        <path d="M57 50l1-24 2-14 2 14 2 24z" fill="#ecdd9a" />
        <path d="M252 50l3-8 2 0 2 8z" fill="#ece8cc" />
        <g fill="#8f8f8d">
            <text x="2" y="10">300,0</text>
            <text x="2" y="25">200,0</text>
            <text x="2" y="40">100,0</text>
            <text x="11" y="54">0,0</text>
            <text x="33" y="16" textLength="16">Кб/с</text>
            {['22:06:00', '22:05:00', '22:04:00', '22:03:00', '22:02:00'].map((t, i) => (
                <text key={t} x={41 + i * 56} y="62" textLength="33">{t}</text>
            ))}
        </g>
    </svg>
);

/* ---------- Windows taskbar ---------- */

const TaskButton: React.FC<{ active?: boolean; children: React.ReactNode }> = ({ active, children }) => (
    <div
        className={clsx(
            'flex h-[35px] w-[55px] items-center justify-center rounded-[2px] border',
            active ? 'border-[#c9c9c9] bg-linear-to-br from-[#d5d5d5] to-[#77777a]' : 'border-[#6e6e6e] bg-linear-to-br from-[#5e5e5c] to-[#1a1a18]'
        )}
    >
        {children}
    </div>
);

const Taskbar = () => (
    <div className="flex h-[39px] items-start gap-[3px] border-t border-b-[3px] border-t-[#6b6c62] border-b-black bg-[linear-gradient(90deg,#0c0c0a_0%,#15150f_34%,#23221b_39%,#34322a_43%,#3e3b32_45%,#13120b_48%,#14130c_50%,#5a5747_52%,#555243_55%,#2c261b_58%,#595242_61%,#4d4534_66%,#3c3626_69%,#17180f_72%,#0e0e09_100%)]">
        <div className="flex w-[54px] justify-center pt-px pr-[4px]">
            <svg width="36" height="36" viewBox="0 0 36 36">
                <defs>
                    <radialGradient id="orb" cx="50%" cy="85%" r="80%">
                        <stop offset="0%" stopColor="#5fd8f4" />
                        <stop offset="45%" stopColor="#1f6fae" />
                        <stop offset="100%" stopColor="#5f7f96" />
                    </radialGradient>
                </defs>
                <circle cx="18" cy="18" r="17" fill="url(#orb)" stroke="#26384a" />
                <path d="M10 11c3-2 5-1.500 7 0l-1.500 6c-2-1.500-4-1.500-7 0z" fill="#f0642c" />
                <path d="M18.500 11.500c3 1.500 5 1 8 0l-2 6c-3 1.500-5 1-7.500 0z" fill="#93c83e" />
                <path d="M8 18.500c3-1.500 5-1.500 7 0l-1.500 6c-2-1.500-4.500-1.500-7 0z" fill="#4fa4e8" />
                <path d="M16.500 19c3 1.500 5 1 7.500 0l-2 6c-2.500 1.500-5 1-7 0z" fill="#fcc92e" />
            </svg>
        </div>
        <div className="flex h-[36px] w-[54px] items-center justify-center">
            <svg width="32" height="30" viewBox="0 0 32 30">
                <path d="M1 4l3-2h7l2 2h15l2 3v20H1z" fill="#ead98e" />
                <path d="M5 1h4v3H5z" fill="#4f9c48" /><path d="M16 2h4v3h-4z" fill="#cc5a48" />
                <path d="M1 8h30v19H1z" fill="#f3e6a6" />
                <path d="M7 28V20q0-3 3-3h12q3 0 3 3v8h-4v-6H11v6z" fill="#8ec7ea" />
            </svg>
        </div>
        <TaskButton>
            <svg width="30" height="28" viewBox="0 0 30 28">
                <circle cx="8" cy="9" r="6.500" fill="#c9cdcc" /><circle cx="8" cy="9" r="3" fill="#f2f2f2" />
                <path d="M7 9h21v12H7z" fill="#4e5150" stroke="#1b1b1b" strokeWidth="1.500" />
                <path d="M5 10v3M5 17v3M29.500 10v3M29.500 17v3" stroke="#8a8c8b" strokeWidth="2" />
                <path d="M6 22h21l2 3H4z" fill="#9b9d9d" /><path d="M3 24.500h26v1.500H3z" fill="#d6d8d8" />
            </svg>
        </TaskButton>
        <TaskButton active>
            <div className="relative flex h-[29px] w-[29px] justify-center bg-[#fbd91d] text-[18px] leading-[18px] font-bold text-[#d9471c]">
                1С
                <svg width="14" height="14" viewBox="0 0 14 14" className="absolute right-0 bottom-0">
                    <path d="M7 0l6 2v5c0 4-3 6-6 7-3-1-6-3-6-7V2z" fill="#3a76c4" />
                    <path d="M7 0l6 2v5H7zM7 7v7c-3-1-6-3-6-7z" fill="#f2d13a" />
                </svg>
            </div>
        </TaskButton>
        <TaskButton>
            <svg width="30" height="28" viewBox="0 0 30 28" fill="none">
                <path d="M1 1h26v25H1z" fill="#f7c948" /><path d="M1 17h26v9H1z" fill="#fdf3d0" />
                <path d="M1 1h26v10L1 17z" fill="#fbe08a" />
                <circle cx="10" cy="12" r="6" stroke="#d0661a" strokeWidth="4" />
                <circle cx="22" cy="12" r="4.500" fill="#f8e8bc" stroke="#d08a2a" />
                <path d="M22 9v3h2.500" stroke="#b06a1a" />
                <path d="M17 18h12v8H17z" fill="#fdf3d0" stroke="#caa14a" /><path d="M17 18l6 4 6-4" stroke="#caa14a" />
            </svg>
        </TaskButton>
        <TaskButton>
            <svg width="28" height="28" viewBox="0 0 28 28">
                <circle cx="14" cy="14" r="13" fill="#f5c92e" />
                <path d="M2.700 7.500A13 13 0 0 1 25.300 7.500L14 8z" fill="#dc3a2a" />
                <path d="M2.700 7.500A13 13 0 0 0 12 26.800L17 18 8 15z" fill="#3fa84a" />
                <path d="M2.700 7.500L8 16l6-8h11.500A13 13 0 0 0 2.700 7.500z" fill="#dc3a2a" />
                <circle cx="14" cy="14" r="6" fill="#eee" /><circle cx="14" cy="14" r="4.700" fill="#3f86d2" />
            </svg>
        </TaskButton>
        <TaskButton>
            <span className="text-[19px] tracking-[-1px] text-black [-webkit-text-stroke:0.500px_#000] [text-shadow:0_0_1px_#fff,1px_0_1px_#fff,-1px_0_1px_#fff,0_1px_1px_#fff,0_-1px_1px_#fff]">CR</span>
        </TaskButton>
        <TaskButton>
            <svg width="30" height="26" viewBox="0 0 30 26">
                <path d="M1 3l13-1 1 14-9 4z" fill="#7fc8b4" />
                <path d="M6 9l11-6 6 15-12 4z" fill="#b4d86a" />
                <path d="M13 7l13-2 3 16-14 3z" fill="#f6e77c" />
            </svg>
        </TaskButton>
        <div className="ml-auto flex h-full items-center text-white">
            <span className="mb-1 text-[11px] text-[#c2c2c2]">EN</span>
            <svg width="8" height="4" viewBox="0 0 8 4" className="mt-[2px] ml-[15px]"><path d="M4 0l4 4H0z" fill="#e5e5e5" /></svg>
            <svg width="14" height="14" viewBox="0 0 14 14" className="mt-[3px] ml-[10px]" fill="none">
                <path d="M2 2h6v11H2z" fill="#f0f0f0" /><path d="M7 5h6v4l-3 2v3M9 2v3M12 2v3" stroke="#fff" strokeWidth="1.500" />
                <path d="M6 6h5v2l-2 2z" fill="#222" />
            </svg>
            <svg width="14" height="13" viewBox="0 0 14 13" className="mt-[3px] ml-[9px]" fill="none">
                <path d="M4 3h9.500v7H4zM6 12.500h6M9 10v2" stroke="#eee" strokeWidth="1.300" /><path d="M0 1h4v4H0z" fill="#eee" />
            </svg>
            <svg width="14" height="13" viewBox="0 0 14 13" className="mt-[3px] ml-[9px]" fill="none">
                <path d="M0 4h3l4-4v13l-4-4H0z" fill="#f4f4f4" /><path d="M9 4q1.500 2.500 0 5M11 2q3 4.500 0 9" stroke="#ccc" />
            </svg>
            <div className="ml-[17px] w-[51px] pt-[3px] text-center font-['Open_Sans',sans-serif] text-[10.500px] leading-[16px] tracking-[-0.300px]">
                <div>22:06</div>
                <div>13.12.2011</div>
            </div>
            <div className="ml-[11px] h-[35px] w-[13px] border-l border-[#555] bg-linear-to-b from-[#4a4a48] to-[#141412]" />
        </div>
    </div>
);

const Cursor = () => (
    <svg width="20" height="28" viewBox="0 0 20 28" className="absolute top-[405px] left-[624px]">
        <path d="M1 23.500h14v3H1z" fill="#8f8f8d" opacity="0.700" />
        <path d="M6 1v15l3.500-3 2.500 6 3-1.200-2.500-5.800h5z" fill="#e9e9e9" stroke="#666" />
    </svg>
);

const App: React.FC = () => (
    <div className="relative flex h-[720px] w-[1280px] flex-col overflow-hidden bg-[#dadad5] font-['Liberation_Sans',Arial,sans-serif] text-[11px] leading-[13px] tracking-[-0.340px] text-[#1c1c1c]">
        <TitleBar />
        <MenuBar />
        <MainToolbar />
        <div className="relative mr-[2px] flex h-[473px] overflow-hidden border-t-2 border-r border-[#6f6f6c] bg-[#e7e4de]">
            <SideTabs />
            <StartPage />
            <OrderListWindow />
            <OrderWindow />
        </div>
        <div className="h-[3px] border-t border-b border-t-[#8b8680] border-b-white" />
        <MessagesPanel />
        <WindowTabs />
        <StatusBar />
        <Taskbar />
        <TrafficChart />
        <Cursor />
    </div>
);

export default App;
